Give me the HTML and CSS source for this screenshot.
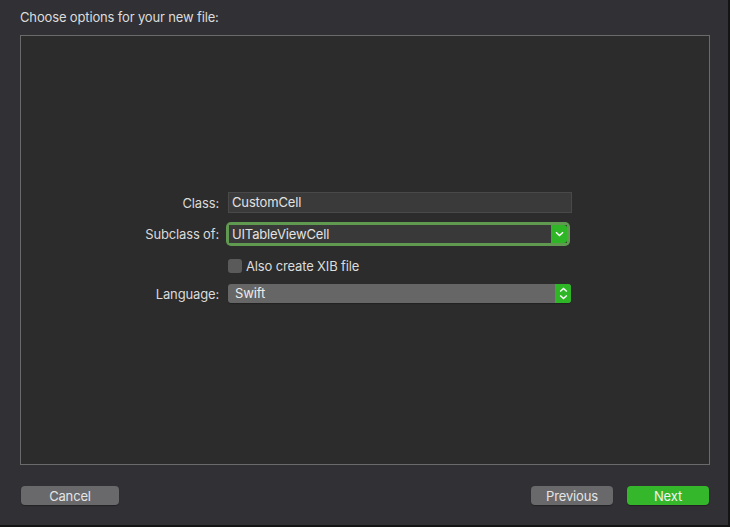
FILE: index.html
```html
<!DOCTYPE html>
<html lang="en">
<head>
  <meta charset="UTF-8">
  <title>Choose options for your new file</title>
  <link rel="stylesheet" href="styles.css">
</head>
<body>

  <div class="window">
    <div class="title">Choose options for your new file:</div>

    <div class="panel">
      <div class="form">
        <div class="row row-class">
          <label class="label">Class:</label>
          <div class="field text-field">CustomCell</div>
        </div>

        <div class="row row-subclass">
          <label class="label">Subclass of:</label>
          <div class="focus-ring">
            <div class="field combo">
              <span class="combo-text">UITableViewCell</span>
              <span class="combo-btn">
                <svg width="9" height="6" viewBox="0 0 9 6"><path d="M1 1.2 L4.5 4.6 L8 1.2" fill="none" stroke="#fff" stroke-width="1.4"/></svg>
              </span>
            </div>
          </div>
        </div>

        <div class="row row-check">
          <span class="label"></span>
          <div class="check">
            <span class="box"></span>
            <span>Also create XIB file</span>
          </div>
        </div>

        <div class="row row-lang">
          <label class="label">Language:</label>
          <div class="popup">
            <span class="popup-text">Swift</span>
            <span class="popup-btn">
              <svg width="9" height="13" viewBox="0 0 9 13"><path d="M1.2 4.6 L4.5 1.4 L7.8 4.6 M1.2 8.4 L4.5 11.6 L7.8 8.4" fill="none" stroke="#fff" stroke-width="1.4"/></svg>
            </span>
          </div>
        </div>
      </div>
    </div>

    <div class="footer">
      <button class="btn cancel">Cancel</button>
      <div class="spacer"></div>
      <button class="btn">Previous</button>
      <button class="btn primary">Next</button>
    </div>
  </div>

</body>
</html>
```

FILE: styles.css
```css
* {
  margin: 0;
  padding: 0;
  box-sizing: border-box;
}

body {
  background: #141414;
  width: 730px;
  height: 527px;
  overflow: hidden;
  font-family: 'Inter', 'Liberation Sans', sans-serif;
  font-size: 13px;
  letter-spacing: -0.15px;
  color: #dfdfdf;
}

.window {
  width: 728px;
  height: 525px;
  background: #313135;
  display: flex;
  flex-direction: column;
}

.title {
  padding: 9px 0 0 20px;
  height: 35px;
  line-height: 16px;
  color: #dcdcdc;
}

.panel {
  margin: 0 18px 0 20px;
  height: 430px;
  background: #2c2c2c;
  border: 1px solid #6a6a6a;
  display: flex;
  align-items: center;
}

.form {
  display: flex;
  flex-direction: column;
  margin-top: -5px;
}

.row {
  display: flex;
  align-items: center;
}

.label {
  width: 198px;
  text-align: right;
  margin-right: 6px;
  color: #dadada;
}

.row-class { height: 21px; }
.row-subclass { height: 24px; margin-top: 9px; }
.row-check { height: 15px; margin-top: 12px; }
.row-lang { height: 19px; margin-top: 11px; }

.field {
  color: #e2e2e2;
}

.text-field {
  margin-left: 3px;
  width: 344px;
  height: 21px;
  background: #3a3a3a;
  border: 1px solid #494949;
  padding-left: 3px;
  line-height: 19px;
}

.focus-ring {
  margin-left: 1px;
  width: 344px;
  height: 24px;
  padding: 3px;
  border-radius: 5px;
  background: #5f9a50;
}

.combo {
  display: flex;
  height: 18px;
  background: #393939;
}

.combo-text {
  flex: 1;
  padding-left: 3px;
  line-height: 18px;
}

.combo-btn {
  width: 16px;
  background: #2fb626;
  border-radius: 0 3px 3px 0;
  display: flex;
  align-items: center;
  justify-content: center;
}

.check {
  margin-left: 3px;
  display: flex;
  align-items: center;
  gap: 4px;
  color: #dcdcdc;
}

.box {
  width: 14px;
  height: 14px;
  border-radius: 3px;
  background: #5a5a5a;
}

.popup {
  margin-left: 3px;
  width: 343px;
  height: 19px;
  background: #666666;
  border-radius: 3px;
  display: flex;
  box-shadow: 0 1px 1px rgba(0,0,0,0.25);
}

.popup-text {
  flex: 1;
  padding-left: 7px;
  line-height: 19px;
  color: #ececec;
}

.popup-btn {
  width: 16px;
  background: #2fb626;
  border-radius: 0 3px 3px 0;
  display: flex;
  align-items: center;
  justify-content: center;
}

.footer {
  display: flex;
  margin: 21px 19px 0 21px;
  gap: 14px;
}

.spacer {
  flex: 1;
}

.btn {
  font-family: inherit;
  font-size: 13px;
  letter-spacing: -0.15px;
  height: 19px;
  width: 82px;
  border: none;
  border-radius: 4px;
  background: #69696b;
  color: #e4e4e4;
  box-shadow: 0 1px 1px rgba(0,0,0,0.3);
}

.btn.cancel {
  width: 98px;
}

.btn.primary {
  background: #35b72c;
  color: #f2f2f2;
}
```
